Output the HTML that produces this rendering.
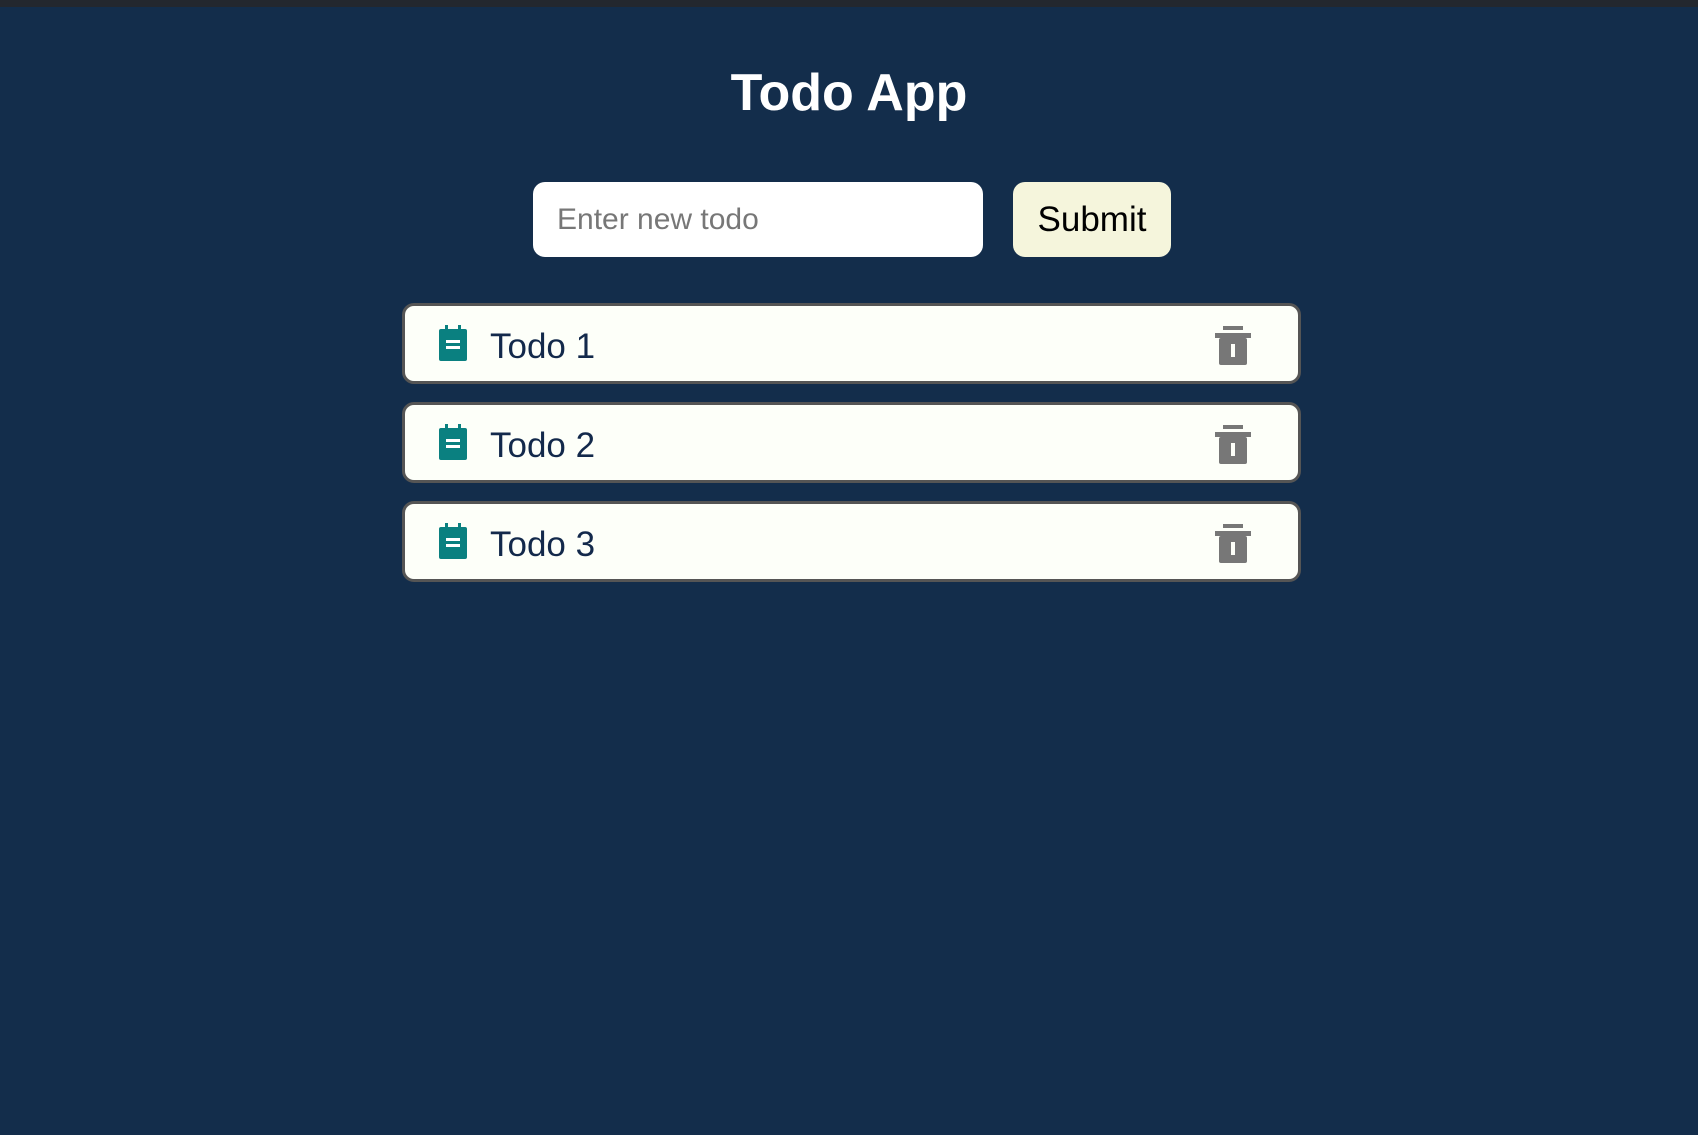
<!DOCTYPE html>
<html><head><meta charset="utf-8"><style>
html,body{margin:0;padding:0}
body{width:1698px;height:1135px;background:#132d4b;position:relative;overflow:hidden;font-family:"Liberation Sans",sans-serif}
.top{position:absolute;left:0;top:0;width:1698px;height:7px;background:#23272e}
h1{position:absolute;left:0;width:1698px;top:63px;margin:0;text-align:center;color:#fff;font-size:52px;font-weight:bold;line-height:60px}
.inp{position:absolute;left:533px;top:182px;width:450px;height:75px;background:#fff;border-radius:12px;box-sizing:border-box;padding-left:24px;line-height:75px;font-size:30px;color:#777}
.btn{position:absolute;left:1013px;top:182px;width:158px;height:75px;background:#f5f5dc;border-radius:12px;text-align:center;line-height:75px;font-size:35px;color:#000}
.card{position:absolute;left:402px;width:899px;height:81px;box-sizing:border-box;border:3px solid #555;border-radius:12px;background:#fdfff9}
.card .ic{position:absolute;left:33px;top:19px}
.card .t{position:absolute;left:85px;top:3px;line-height:76px;font-size:35px;color:#13294b}
.card .tr{position:absolute;left:809px;top:20px}
</style></head><body>
<div class="top"></div>
<h1>Todo App</h1>
<div class="inp">Enter new todo</div>
<div class="btn">Submit</div>
<div class="card" style="top:303px">
<svg class="ic" width="30" height="36" viewBox="0 0 30 36"><rect x="7" y="0" width="3" height="6" fill="#0a8080"/><rect x="20" y="0" width="3" height="6" fill="#0a8080"/><rect x="1" y="4" width="28" height="32" rx="2" fill="#0a8080"/><rect x="8" y="15" width="14" height="3" fill="#fff"/><rect x="8" y="21" width="14" height="3" fill="#fff"/></svg>
<div class="t">Todo 1</div>
<svg class="tr" width="38" height="40" viewBox="0 0 38 40"><rect x="9" y="0" width="20" height="4" fill="#777"/><rect x="1" y="7" width="36" height="5" fill="#777"/><rect x="5" y="12" width="28" height="27" rx="2" fill="#777"/><rect x="17" y="18" width="4" height="13" fill="#fdfff9"/></svg>
</div>
<div class="card" style="top:402px">
<svg class="ic" width="30" height="36" viewBox="0 0 30 36"><rect x="7" y="0" width="3" height="6" fill="#0a8080"/><rect x="20" y="0" width="3" height="6" fill="#0a8080"/><rect x="1" y="4" width="28" height="32" rx="2" fill="#0a8080"/><rect x="8" y="15" width="14" height="3" fill="#fff"/><rect x="8" y="21" width="14" height="3" fill="#fff"/></svg>
<div class="t">Todo 2</div>
<svg class="tr" width="38" height="40" viewBox="0 0 38 40"><rect x="9" y="0" width="20" height="4" fill="#777"/><rect x="1" y="7" width="36" height="5" fill="#777"/><rect x="5" y="12" width="28" height="27" rx="2" fill="#777"/><rect x="17" y="18" width="4" height="13" fill="#fdfff9"/></svg>
</div>
<div class="card" style="top:501px">
<svg class="ic" width="30" height="36" viewBox="0 0 30 36"><rect x="7" y="0" width="3" height="6" fill="#0a8080"/><rect x="20" y="0" width="3" height="6" fill="#0a8080"/><rect x="1" y="4" width="28" height="32" rx="2" fill="#0a8080"/><rect x="8" y="15" width="14" height="3" fill="#fff"/><rect x="8" y="21" width="14" height="3" fill="#fff"/></svg>
<div class="t">Todo 3</div>
<svg class="tr" width="38" height="40" viewBox="0 0 38 40"><rect x="9" y="0" width="20" height="4" fill="#777"/><rect x="1" y="7" width="36" height="5" fill="#777"/><rect x="5" y="12" width="28" height="27" rx="2" fill="#777"/><rect x="17" y="18" width="4" height="13" fill="#fdfff9"/></svg>
</div>
</body></html>
